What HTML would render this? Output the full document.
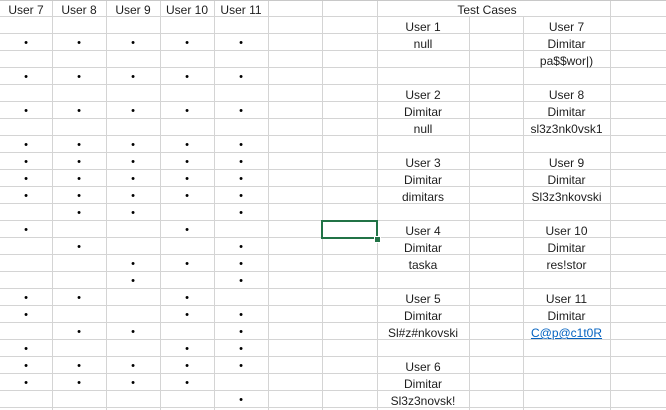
<!DOCTYPE html>
<html><head><meta charset="utf-8"><style>
html,body{margin:0;width:666px;height:410px;overflow:hidden}
body{background:#fff;position:relative;font-family:"Liberation Sans",sans-serif;font-size:12px;color:#1e1e1e}
.g{position:absolute;left:0;top:0;width:666px;height:410px;background:repeating-linear-gradient(to bottom,transparent 0 16px,#d4d4d4 16px 17px)}
.v{position:absolute;top:0;height:410px;width:1px;background:#d4d4d4}
.r{position:absolute;left:0;width:666px;height:17px;line-height:17px;padding-top:2px}
.r span{position:absolute;text-align:center;top:2px}
.a{left:0;width:52px}.b{left:52px;width:54px}.c{left:106px;width:54px}.d{left:160px;width:54px}.e{left:214px;width:54px}
.h{left:377px;width:92px}.j{left:523px;width:87px}
.r span.dt{font-size:11px;color:#000;top:1px}
</style></head><body>
<div class="g"></div>
<div class="v" style="left:52px"></div><div class="v" style="left:106px"></div><div class="v" style="left:160px"></div><div class="v" style="left:214px"></div><div class="v" style="left:268px"></div><div class="v" style="left:322px"></div><div class="v" style="left:377px"></div>
<div class="v" style="left:469px;top:17px"></div><div class="v" style="left:523px;top:17px"></div><div class="v" style="left:610px"></div>
<div style="position:absolute;left:378px;top:0;width:232px;height:16px;background:#fff"></div>
<div style="position:absolute;left:0;top:0;width:666px;height:1px;background:#c8c8c8"></div>

<div class="r" style="top:0"><span class="a">User 7</span><span class="b">User 8</span><span class="c">User 9</span><span class="d">User 10</span><span class="e">User 11</span><span style="left:377px;width:220px">Test Cases</span></div>
<div class="r" style="top:17px"><span class="h">User 1</span><span class="j">User 7</span></div>
<div class="r" style="top:34px"><span class="a dt">•</span><span class="b dt">•</span><span class="c dt">•</span><span class="d dt">•</span><span class="e dt">•</span><span class="h">null</span><span class="j">Dimitar</span></div>
<div class="r" style="top:51px"><span class="j">pa$$wor|)</span></div>
<div class="r" style="top:68px"><span class="a dt">•</span><span class="b dt">•</span><span class="c dt">•</span><span class="d dt">•</span><span class="e dt">•</span></div>
<div class="r" style="top:85px"><span class="h">User 2</span><span class="j">User 8</span></div>
<div class="r" style="top:102px"><span class="a dt">•</span><span class="b dt">•</span><span class="c dt">•</span><span class="d dt">•</span><span class="e dt">•</span><span class="h">Dimitar</span><span class="j">Dimitar</span></div>
<div class="r" style="top:119px"><span class="h">null</span><span class="j">sl3z3nk0vsk1</span></div>
<div class="r" style="top:136px"><span class="a dt">•</span><span class="b dt">•</span><span class="c dt">•</span><span class="d dt">•</span><span class="e dt">•</span></div>
<div class="r" style="top:153px"><span class="a dt">•</span><span class="b dt">•</span><span class="c dt">•</span><span class="d dt">•</span><span class="e dt">•</span><span class="h">User 3</span><span class="j">User 9</span></div>
<div class="r" style="top:170px"><span class="a dt">•</span><span class="b dt">•</span><span class="c dt">•</span><span class="d dt">•</span><span class="e dt">•</span><span class="h">Dimitar</span><span class="j">Dimitar</span></div>
<div class="r" style="top:187px"><span class="a dt">•</span><span class="b dt">•</span><span class="c dt">•</span><span class="d dt">•</span><span class="e dt">•</span><span class="h">dimitars</span><span class="j">Sl3z3nkovski</span></div>
<div class="r" style="top:204px"><span class="b dt">•</span><span class="c dt">•</span><span class="e dt">•</span></div>
<div class="r" style="top:221px"><span class="a dt">•</span><span class="d dt">•</span><span class="h">User 4</span><span class="j">User 10</span></div>
<div class="r" style="top:238px"><span class="b dt">•</span><span class="e dt">•</span><span class="h">Dimitar</span><span class="j">Dimitar</span></div>
<div class="r" style="top:255px"><span class="c dt">•</span><span class="d dt">•</span><span class="e dt">•</span><span class="h">taska</span><span class="j">res!stor</span></div>
<div class="r" style="top:272px"><span class="c dt">•</span><span class="e dt">•</span></div>
<div class="r" style="top:289px"><span class="a dt">•</span><span class="b dt">•</span><span class="d dt">•</span><span class="h">User 5</span><span class="j">User 11</span></div>
<div class="r" style="top:306px"><span class="a dt">•</span><span class="d dt">•</span><span class="e dt">•</span><span class="h">Dimitar</span><span class="j">Dimitar</span></div>
<div class="r" style="top:323px"><span class="b dt">•</span><span class="c dt">•</span><span class="e dt">•</span><span class="h">Sl#z#nkovski</span><span class="j" style="color:#0563c1;text-decoration:underline">C@p@c1t0R</span></div>
<div class="r" style="top:340px"><span class="a dt">•</span><span class="d dt">•</span><span class="e dt">•</span></div>
<div class="r" style="top:357px"><span class="a dt">•</span><span class="b dt">•</span><span class="c dt">•</span><span class="d dt">•</span><span class="e dt">•</span><span class="h">User 6</span></div>
<div class="r" style="top:374px"><span class="a dt">•</span><span class="b dt">•</span><span class="c dt">•</span><span class="d dt">•</span><span class="h">Dimitar</span></div>
<div class="r" style="top:391px"><span class="e dt">•</span><span class="h">Sl3z3novsk!</span></div>

<div style="position:absolute;left:321px;top:220px;width:53px;height:15px;border:2px solid #217346"></div>
<div style="position:absolute;left:374px;top:236px;width:5px;height:5px;background:#217346;border:1px solid #fff"></div>
</body></html>
